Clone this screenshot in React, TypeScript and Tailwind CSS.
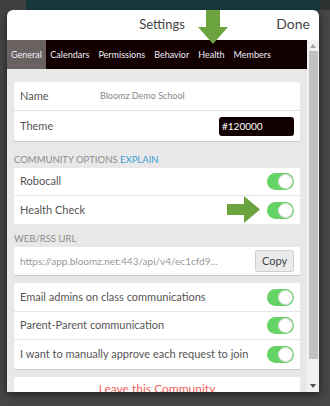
import React from 'react';

const Toggle = () => (
  <div className="relative h-[17px] w-[27px] rounded-full bg-[#65d366]">
    <div className="absolute right-[1px] top-[1px] h-[15px] w-[15px] rounded-full border border-[#d9d9d9] bg-white" />
  </div>
);

const tabs = ['General', 'Calendars', 'Permissions', 'Behavior', 'Health', 'Members'];

export default function App() {
  return (
    <div className="relative h-[406px] w-[330px] overflow-hidden bg-[#464646]" style={{ fontFamily: 'Lato, "Open Sans", sans-serif' }}>
      {/* backdrop top strip */}
      <div className="flex h-[10px]">
        <div className="w-[26px] bg-[#3d3f40]" />
        <div className="flex-1 bg-[#17363c]" />
        <div className="w-[10px] bg-[#2f3233]" />
      </div>

      {/* modal */}
      <div className="ml-[7px] flex h-[382px] w-[312px] flex-col overflow-hidden rounded-t-[6px] bg-white shadow-[0_2px_8px_rgba(0,0,0,0.6)]">
        <div className="relative flex h-[30px] shrink-0 items-center justify-center">
          <span className="ml-[-2px] text-[13px] text-[#444]">Settings</span>
          <span className="absolute right-[9px] top-[3px] text-[14px] text-[#444]">Done</span>
        </div>

        <div className="flex min-h-0 flex-1">
          <div className="flex min-w-0 flex-1 flex-col">
            <div className="flex h-[29px] shrink-0 items-center bg-[#120000] text-[9px] text-[#eeeefa]">
              {tabs.map((t, i) => (
                <div
                  key={t}
                  className={
                    i === 0
                      ? 'flex h-full items-center bg-[#6a6161] px-[4px]'
                      : 'flex h-full items-center px-[4.5px]'
                  }
                >
                  {t}
                </div>
              ))}
            </div>

            <div className="flex-1 bg-[#e8e8e8] px-[7px] pt-[13px] text-[11px] text-[#555]">
              <div className="rounded-[2px] bg-white shadow-[0_1px_1px_rgba(0,0,0,0.15)]">
                <div className="flex h-[29px] items-center border-b border-[#e0e0e0] px-[6px]">
                  <span className="w-[80px]">Name</span>
                  <span className="text-[9px] text-[#888]">Bloomz Demo School</span>
                </div>
                <div className="flex h-[30px] items-center justify-between px-[6px]">
                  <span>Theme</span>
                  <div className="flex h-[19px] w-[75px] items-center rounded-[3px] bg-[#120000] px-[3px] text-[10px] text-white">
                    #120000
                  </div>
                </div>
              </div>

              <div className="mt-[13px] mb-[3px] text-[9.5px] leading-[11px] uppercase text-[#8c8c8c]">
                Community Options <span className="text-[#3a9fd6]">Explain</span>
              </div>
              <div className="rounded-[2px] bg-white">
                <div className="flex h-[28px] items-center justify-between border-b border-[#e6e6e6] px-[6px]">
                  <span>Robocall</span>
                  <Toggle />
                </div>
                <div className="relative flex h-[28px] items-center justify-between px-[6px]">
                  <span>Health Check</span>
                  <svg className="absolute left-[213px] top-[0px]" width="33" height="27" viewBox="0 0 33 27">
                    <polygon points="0,8 17,8 17,0 33,13.5 17,27 17,19 0,19" fill="#6ba33f" />
                  </svg>
                  <Toggle />
                </div>
              </div>

              <div className="mt-[9px] mb-[3px] text-[9.5px] leading-[11px] uppercase text-[#8c8c8c]">Web/RSS URL</div>
              <div className="flex h-[28px] items-center justify-between rounded-[2px] bg-white px-[6px] shadow-[0_1px_1px_rgba(0,0,0,0.15)]">
                <span className="text-[10px] text-[#999]">https://app.bloomz.net:443/api/v4/ec1cfd9...</span>
                <div className="flex h-[22px] w-[39px] items-center justify-center rounded-[2px] border border-[#cfcfcf] bg-[#ebebeb] text-[11px] text-[#444]">
                  Copy
                </div>
              </div>

              <div className="mt-[8px] rounded-[2px] bg-white shadow-[0_1px_1px_rgba(0,0,0,0.15)]">
                <div className="flex h-[29px] items-center justify-between border-b border-[#e6e6e6] px-[6px]">
                  <span>Email admins on class communications</span>
                  <Toggle />
                </div>
                <div className="flex h-[28px] items-center justify-between border-b border-[#e6e6e6] px-[6px]">
                  <span>Parent-Parent communication</span>
                  <Toggle />
                </div>
                <div className="flex h-[29px] items-center justify-between px-[6px]">
                  <span>I want to manually approve each request to join</span>
                  <Toggle />
                </div>
              </div>

              <div className="mt-[8px] flex h-[28px] items-start justify-center rounded-[2px] bg-white pt-[3px] text-[12px] leading-[18px] text-[#f25f5c]">
                Leave this Community
              </div>
            </div>
          </div>

          {/* scrollbar */}
          <div className="flex w-[12px] shrink-0 flex-col items-center bg-[#f1f1f1]">
            <div className="mt-[4px] h-0 w-0 border-x-[3px] border-b-[4px] border-x-transparent border-b-[#a3a3a3]" />
            <div className="mt-[3px] h-[308px] w-[9px] bg-[#c1c1c1]" />
            <div className="mt-auto mb-[4px] h-0 w-0 border-x-[3px] border-t-[4px] border-x-transparent border-t-[#505050]" />
          </div>
        </div>
      </div>

      {/* top arrow */}
      <svg className="absolute left-[198px] top-[10px]" width="30" height="34" viewBox="0 0 30 34">
        <polygon points="8,0 22,0 22,17 30,17 15,34 0,17 8,17" fill="#6ba33f" />
      </svg>
    </div>
  );
}
